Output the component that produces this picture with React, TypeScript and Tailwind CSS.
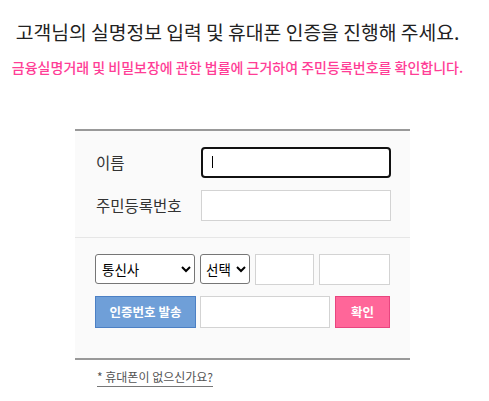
import React from 'react';

const font = { fontFamily: '"Noto Sans CJK KR", "Noto Sans", sans-serif' };

const App = () => {
    return (
        <div className="w-[489px] h-[401px] bg-white overflow-hidden" style={font}>
            <div className="pt-[18px] pr-[14px] text-center">
                <h1 className="text-[19.3px] leading-[28px] text-[#222] font-normal">
                    고객님의 실명정보 입력 및 휴대폰 인증을 진행해 주세요.
                </h1>
                <p className="mt-[12px] text-[14px] leading-[19px] text-[#ff3d96] font-medium">
                    금융실명거래 및 비밀보장에 관한 법률에 근거하여 주민등록번호를 확인합니다.
                </p>
            </div>

            <div className="ml-[75px] mt-[52px] w-[335px] bg-[#fafafa] border-t-2 border-b-2 border-[#999]">
                <div className="pr-[19px] pl-[21px] py-[16px] flex flex-col gap-[12px] border-b border-[#e6e6e6]">
                    <div className="flex items-center">
                        <label className="w-[105px] text-[15.5px] text-[#333]">이름</label>
                        <div className="relative">
                            <input
                                type="text"
                                className="w-[190px] h-[31px] bg-white border-2 border-[#111] rounded-[4px] outline-none"
                            />
                            <span className="absolute left-[11px] top-[9px] w-px h-[12px] bg-black" />
                        </div>
                    </div>
                    <div className="flex items-center">
                        <label className="w-[105px] text-[15.5px] text-[#333]">주민등록번호</label>
                        <input
                            type="password"
                            className="w-[190px] h-[31px] bg-white border border-[#d3d3d3] outline-none"
                        />
                    </div>
                </div>

                <div className="pl-[20px] pr-[19px] pt-[16px] pb-[30px] flex flex-col gap-[11px]">
                    <div className="flex gap-[5px]">
                        <select className="w-[100px] h-[30px] bg-white border border-[#767676] rounded-[3px] text-[13.5px] text-black pl-[2px]">
                            <option>통신사</option>
                            <option>SKT</option>
                            <option>KT</option>
                            <option>LG U+</option>
                        </select>
                        <select className="w-[50px] h-[30px] bg-white border border-[#767676] rounded-[3px] text-[13.5px] text-black pl-[1px]">
                            <option>선택</option>
                            <option>010</option>
                            <option>011</option>
                        </select>
                        <input type="text" className="w-[59px] h-[31px] bg-white border border-[#d3d3d3] outline-none" />
                        <input type="text" className="w-[71px] h-[31px] bg-white border border-[#d3d3d3] outline-none" />
                    </div>
                    <div className="flex gap-[4px]">
                        <button className="w-[101px] h-[32px] bg-[#6f9fd8] border border-[#4c80c4] text-white text-[12.5px] font-bold">
                            인증번호 발송
                        </button>
                        <input type="text" className="w-[130px] h-[32px] bg-white border border-[#d3d3d3] outline-none" />
                        <button className="ml-[1px] w-[55px] h-[32px] bg-[#ff6699] border border-[#e8457f] text-white text-[12.5px] font-bold">
                            확인
                        </button>
                    </div>
                </div>
            </div>

            <div className="ml-[97px] mt-[3px]">
                <a href="#" className="inline-block text-[12px] leading-[16px] text-[#555] border-b border-[#777] pb-[1px]">
                    * 휴대폰이 없으신가요?
                </a>
            </div>
        </div>
    );
};

export default App;
